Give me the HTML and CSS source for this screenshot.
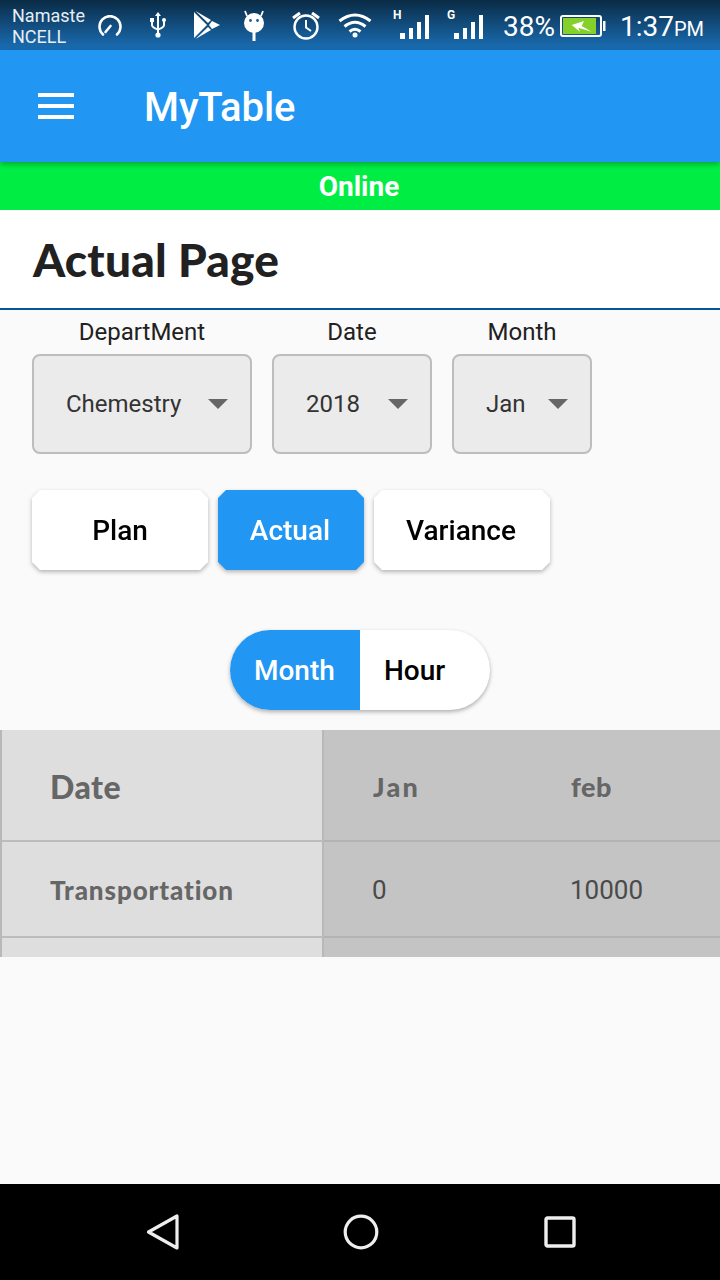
FILE: index.html
```html
<!DOCTYPE html>
<html lang="en">
<head>
<meta charset="UTF-8" />
<meta name="viewport" content="width=device-width, initial-scale=1" />
<title>MyTable</title>
<link rel="stylesheet" href="styles.css">
</head>
<body>
  <div class="phone">
    <div class="status-bar">
      <div class="carrier">Namaste<br>NCELL</div>
      <svg class="ic-gauge" width="24" height="22" viewBox="0 0 24 22" fill="none" stroke="#fff" stroke-width="2.6" stroke-linecap="round">
        <path d="M5 19.500A10.500 10.500 0 1 1 19 19.500"/>
        <path d="M7.500 17L12.500 11"/>
      </svg>
      <svg class="ic-usb" width="16" height="26" viewBox="0 0 16 26" fill="none" stroke="#fff" stroke-width="2">
        <path d="M8 4V23"/>
        <path d="M2 9V13Q2 15.500 8 17.500Q14 15.500 14 13V9"/>
        <path d="M8 0L11 4H5Z" fill="#fff" stroke="none"/>
        <rect x="0" y="6" width="4" height="4" fill="#fff" stroke="none"/>
        <circle cx="14" cy="8" r="2" fill="#fff" stroke="none"/>
        <circle cx="8" cy="23" r="2.600" fill="#fff" stroke="none"/>
      </svg>
      <svg class="ic-play" width="26" height="28" viewBox="0 0 26 28" fill="#fff">
        <path d="M0 1L13 14L0 27Z"/>
        <path d="M1.500 0L17 9L14 12Z"/>
        <path d="M1.500 28L17 19L14 16Z"/>
        <path d="M18 10L26 14L18 18L15 14Z"/>
      </svg>
      <svg class="ic-android" width="22" height="31" viewBox="0 0 22 31" fill="none">
        <circle cx="11" cy="13" r="10" fill="#fff"/>
        <path d="M4 6L2 1M18 6L20 1" stroke="#fff" stroke-width="1.800"/>
        <path d="M11 22V31" stroke="#fff" stroke-width="3"/>
        <circle cx="7.500" cy="10.500" r="1.400" fill="#1a5d96"/>
        <circle cx="14.500" cy="10.500" r="1.400" fill="#1a5d96"/>
      </svg>
      <svg class="ic-alarm" width="28" height="30" viewBox="0 0 28 30" fill="none" stroke="#fff" stroke-width="2.400">
        <circle cx="14" cy="16" r="11.500"/>
        <path d="M14 9V16.500L19 20" stroke-width="2"/>
        <path d="M1 7L8 2M27 7L20 2" stroke-width="3"/>
      </svg>
      <svg class="ic-wifi" width="34" height="26" viewBox="0 0 34 26" fill="none" stroke="#fff" stroke-width="3">
        <path d="M1.500 9Q17 -3 32.500 9"/>
        <path d="M6.500 14.500Q17 6 27.500 14.500"/>
        <path d="M11.500 19.500Q17 15 22.500 19.500"/>
        <circle cx="17" cy="23" r="2.500" fill="#fff" stroke="none"/>
      </svg>
      <div class="signal ic-h">
        <span class="net">H</span>
        <svg width="30" height="24" viewBox="0 0 30 24" fill="#fff">
          <rect x="0" y="18" width="5" height="6"/>
          <rect x="9" y="13" width="4" height="11"/>
          <rect x="17" y="7" width="4" height="17"/>
          <rect x="25" y="0" width="4" height="24"/>
        </svg>
      </div>
      <div class="signal ic-g">
        <span class="net">G</span>
        <svg width="30" height="24" viewBox="0 0 30 24" fill="#fff">
          <rect x="0" y="18" width="5" height="6"/>
          <rect x="9" y="13" width="4" height="11"/>
          <rect x="17" y="7" width="4" height="17"/>
          <rect x="25" y="0" width="4" height="24"/>
        </svg>
      </div>
      <div class="percent">38%</div>
      <svg class="ic-battery" width="46" height="22" viewBox="0 0 46 22" fill="none">
        <rect x="1" y="1" width="40" height="20" rx="2" stroke="#fff" stroke-width="2"/>
        <rect x="43" y="6" width="2.500" height="10" fill="#fff"/>
        <rect x="3" y="3" width="33" height="16" fill="#85d02a"/>
        <path d="M11.700 10L24 6L21.700 11L31.700 16.700L18.300 12.700L20 16.700Z" fill="#fff"/>
      </svg>
      <div class="clock">1:37<span class="ampm">PM</span></div>
    </div>

    <header class="app-bar">
      <div class="menu"><span></span><span></span><span></span></div>
      <div class="app-title">MyTable</div>
    </header>
    <div class="online">Online</div>
    <div class="page-title">Actual Page</div>

    <div class="filters">
      <div class="filter filter-dept">
        <div class="filter-label">DepartMent</div>
        <div class="dropdown"><span>Chemestry</span><i class="caret"></i></div>
      </div>
      <div class="filter filter-date">
        <div class="filter-label">Date</div>
        <div class="dropdown"><span>2018</span><i class="caret"></i></div>
      </div>
      <div class="filter filter-month">
        <div class="filter-label">Month</div>
        <div class="dropdown"><span>Jan</span><i class="caret"></i></div>
      </div>
    </div>

    <div class="tabs">
      <div class="tab-wrap"><div class="tab tab-plan">Plan</div></div>
      <div class="tab-wrap"><div class="tab tab-actual active">Actual</div></div>
      <div class="tab-wrap"><div class="tab tab-variance">Variance</div></div>
    </div>

    <div class="toggle-row">
      <div class="toggle">
        <div class="toggle-item active">Month</div>
        <div class="toggle-item">Hour</div>
      </div>
    </div>

    <div class="table">
      <div class="fixed-col">
        <div class="cell head-row"><span class="head-date">Date</span></div>
        <div class="cell body-row"><span class="row-name">Transportation</span></div>
        <div class="cell tail-row"></div>
      </div>
      <div class="scroll-col">
        <div class="row head-row">
          <div class="col col-a head-month">Jan</div>
          <div class="col head-month">feb</div>
        </div>
        <div class="row body-row">
          <div class="col col-a value">0</div>
          <div class="col value">10000</div>
        </div>
        <div class="row tail-row"></div>
      </div>
    </div>

    <div class="spacer"></div>

    <nav class="nav-bar">
      <svg class="nav-back" width="36" height="38" viewBox="0 0 36 38" fill="none" stroke="#eee" stroke-width="3.200" stroke-linejoin="round"><path d="M3.500 19L32 3V35Z"/></svg>
      <svg class="nav-home" width="36" height="36" viewBox="0 0 36 36" fill="none" stroke="#eee" stroke-width="3.200"><circle cx="18" cy="18" r="15.800"/></svg>
      <svg class="nav-recent" width="32" height="32" viewBox="0 0 32 32" fill="none" stroke="#eee" stroke-width="3.400" stroke-linejoin="round"><rect x="2" y="2" width="28" height="28" rx="1.500"/></svg>
    </nav>
  </div>
</body>
</html>
```
FILE: styles.css
```css
* {
  box-sizing: border-box;
}
html, body {
  margin: 0;
  padding: 0;
}
body {
  font-family: Roboto, sans-serif;
  background: #fafafa;
}
.phone {
  width: 720px;
  height: 1280px;
  display: flex;
  flex-direction: column;
  overflow: hidden;
  background: #fafafa;
}

/* status bar */
.status-bar {
  height: 50px;
  flex: none;
  display: flex;
  align-items: center;
  padding-left: 12px;
  color: #fff;
  background: linear-gradient(180deg, #0a2b45, #1a6fb6);
}
.carrier {
  width: 74px;
  font-size: 18px;
  line-height: 21px;
  color: #e8eef4;
  padding-top: 1px;
  white-space: nowrap;
}
.ic-gauge { margin: 2px 0 0 12px; }
.ic-usb { margin: 0 0 0 28px; }
.ic-play { margin: 0 0 0 28px; }
.ic-android { margin: 0 0 0 23px; }
.ic-alarm { margin: 2px 0 0 27px; }
.ic-wifi { margin: 0 0 0 18px; }
.signal {
  position: relative;
  height: 24px;
  display: flex;
  align-items: flex-end;
  margin-top: 3px;
}
.signal svg {
  margin-left: 7px;
}
.net {
  position: absolute;
  left: 0;
  top: -6px;
  font-size: 12px;
  font-weight: 700;
  line-height: 12px;
}
.ic-h { margin-left: 21px; }
.ic-g { margin-left: 17px; }
.percent {
  margin-left: 19px;
  font-size: 28px;
  line-height: 32px;
  padding-top: 3px;
}
.ic-battery { margin: 2px 0 0 5px; }
.clock {
  margin-left: 14px;
  font-size: 28px;
  line-height: 32px;
  padding-top: 6px;
  white-space: nowrap;
}
.ampm {
  font-size: 20px;
}

/* app bar */
.app-bar {
  height: 112px;
  flex: none;
  display: flex;
  align-items: center;
  padding-left: 38px;
  background: #2196f3;
  box-shadow: 0 2px 6px rgba(0,0,0,0.3);
  position: relative;
  z-index: 2;
}
.menu {
  width: 36px;
  display: flex;
  flex-direction: column;
  gap: 7px;
}
.menu span {
  display: block;
  height: 4px;
  background: #fff;
}
.app-title {
  margin-left: 70px;
  padding-top: 2px;
  color: #fff;
  font-size: 40px;
  font-weight: 500;
  letter-spacing: -0.1px;
}
.online {
  height: 48px;
  flex: none;
  padding: 1px 2px 0 0;
  background: #00ee44;
  color: #fff;
  font-size: 28px;
  font-weight: 700;
  line-height: 48px;
  text-align: center;
}
.page-title {
  height: 100px;
  flex: none;
  padding-left: 33px;
  background: #fff;
  border-bottom: 2px solid #01579b;
  color: #212121;
  font-family: "Lato", sans-serif;
  font-size: 46px;
  font-weight: 900;
  line-height: 100px;
  letter-spacing: 0.2px;
}

/* dropdown filters */
.filters {
  display: flex;
  gap: 20px;
  padding: 8px 0 0 32px;
  flex: none;
}
.filter-dept { width: 220px; }
.filter-date { width: 160px; }
.filter-month { width: 140px; }
.filter-label {
  height: 36px;
  font-size: 24px;
  line-height: 28px;
  color: #212121;
  text-align: center;
}
.dropdown {
  height: 100px;
  display: flex;
  align-items: center;
  justify-content: space-between;
  padding: 0 22px 0 32px;
  background: #ebebeb;
  border: 2px solid #bdbdbd;
  border-radius: 8px;
  font-size: 24px;
  color: #333;
}
.caret {
  width: 0;
  height: 0;
  border-left: 10px solid transparent;
  border-right: 10px solid transparent;
  border-top: 10px solid #666;
}

/* plan / actual / variance */
.tabs {
  display: flex;
  gap: 10px;
  padding: 36px 0 0 32px;
  flex: none;
}
.tab-wrap {
  filter: drop-shadow(0 2px 2px rgba(0,0,0,0.28));
}
.tab {
  height: 80px;
  padding-top: 1px;
  display: flex;
  align-items: center;
  justify-content: center;
  background: #fff;
  color: #000;
  font-size: 28px;
  font-weight: 500;
  clip-path: polygon(8px 0, calc(100% - 8px) 0, 100% 8px, 100% calc(100% - 8px), calc(100% - 8px) 100%, 8px 100%, 0 calc(100% - 8px), 0 8px);
}
.tab.active {
  background: #2196f3;
  color: #fff;
}
.tab-plan { width: 176px; }
.tab-actual { width: 146px; padding-right: 2px; }
.tab-variance { width: 176px; padding-right: 2px; }

/* month / hour */
.toggle-row {
  display: flex;
  justify-content: center;
  padding-top: 60px;
  flex: none;
}
.toggle {
  width: 260px;
  height: 80px;
  display: flex;
  border-radius: 40px;
  overflow: hidden;
  background: #fff;
  box-shadow: 0 2px 4px rgba(0,0,0,0.3);
}
.toggle-item {
  width: 130px;
  padding: 1px 0 0 24px;
  display: flex;
  align-items: center;
  font-size: 28px;
  font-weight: 500;
  color: #000;
}
.toggle-item.active {
  background: #2196f3;
  color: #fff;
}

/* table */
.table {
  display: flex;
  height: 227px;
  margin-top: 20px;
  flex: none;
  font-family: "Lato", sans-serif;
}
.fixed-col {
  width: 324px;
  background: #dedede;
  border-left: 2px solid #b8b8b8;
  border-right: 2px solid #b8b8b8;
}
.scroll-col {
  flex: 1;
  background: #c4c4c4;
}
.head-row {
  height: 112px;
  padding-top: 2px;
  border-bottom: 2px solid #bcbcbc;
}
.body-row {
  height: 96px;
  padding-top: 2px;
  border-bottom: 2px solid #bcbcbc;
}
.tail-row {
  height: 19px;
}
.scroll-col .head-row,
.scroll-col .body-row {
  border-bottom-color: #b3b3b3;
}
.cell {
  display: flex;
  align-items: center;
  padding-left: 48px;
  color: #666;
  font-weight: 900;
}
.head-date {
  font-size: 32px;
  letter-spacing: 0.5px;
}
.row-name {
  font-size: 26px;
  letter-spacing: 0.9px;
}
.row {
  display: flex;
  align-items: center;
  padding-left: 49px;
  color: #666;
}
.row.body-row {
  padding-left: 48px;
}
.col-a {
  width: 198px;
}
.head-month {
  font-size: 27px;
  font-weight: 900;
  letter-spacing: 0.6px;
}
.col-a.head-month {
  letter-spacing: 2.2px;
}
.value {
  font-family: Roboto, sans-serif;
  font-size: 26px;
  color: #4a4a4a;
}

.spacer {
  flex: 1;
}

/* android nav */
.nav-bar {
  height: 96px;
  flex: none;
  display: flex;
  align-items: center;
  background: #000;
  padding-left: 145px;
}
.nav-home { margin-left: 162px; }
.nav-recent { margin-left: 165px; }
```
